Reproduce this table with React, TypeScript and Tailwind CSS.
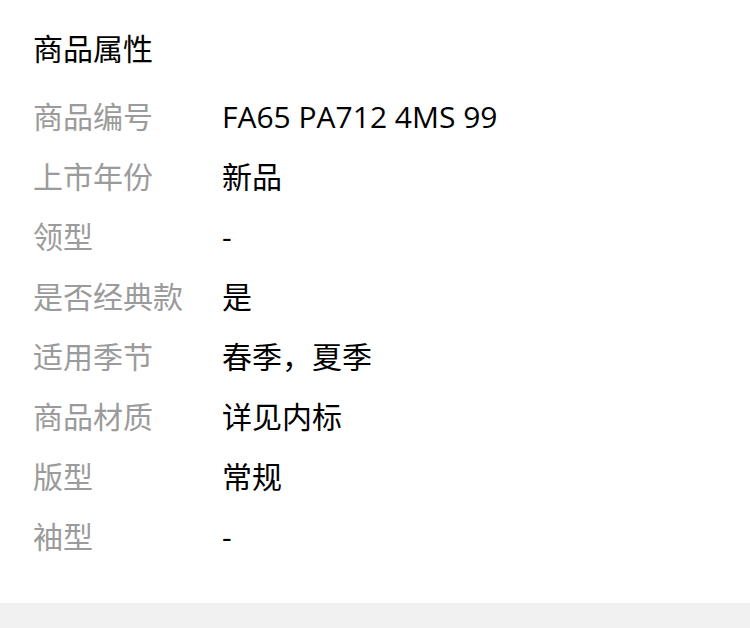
import React from 'react';

const rows: [string, string][] = [
    ['商品编号', 'FA65 PA712 4MS 99'],
    ['上市年份', '新品'],
    ['领型', '-'],
    ['是否经典款', '是'],
    ['适用季节', '春季，夏季'],
    ['商品材质', '详见内标'],
    ['版型', '常规'],
    ['袖型', '-'],
];

export default function App() {
    return (
        <div className="w-[750px] h-[628px] bg-white flex flex-col overflow-hidden" style={{ fontFamily: '"Open Sans", "Noto Sans CJK SC", sans-serif' }}>
            <div className="flex-1 pl-[33px]">
                <h2 className="h-[60px] mt-[18px] flex items-center text-[30px] text-black font-normal">商品属性</h2>
                <div className="mt-[8px]">
                    {rows.map(([k, v]) => (
                        <div key={k} className="h-[60px] flex items-center text-[30px]">
                            <span className="w-[189px] text-[#9b9b9b]">{k}</span>
                            <span className="text-black">{v}</span>
                        </div>
                    ))}
                </div>
            </div>
            <div className="h-[25px] bg-[#f1f1f1]"></div>
        </div>
    );
}
